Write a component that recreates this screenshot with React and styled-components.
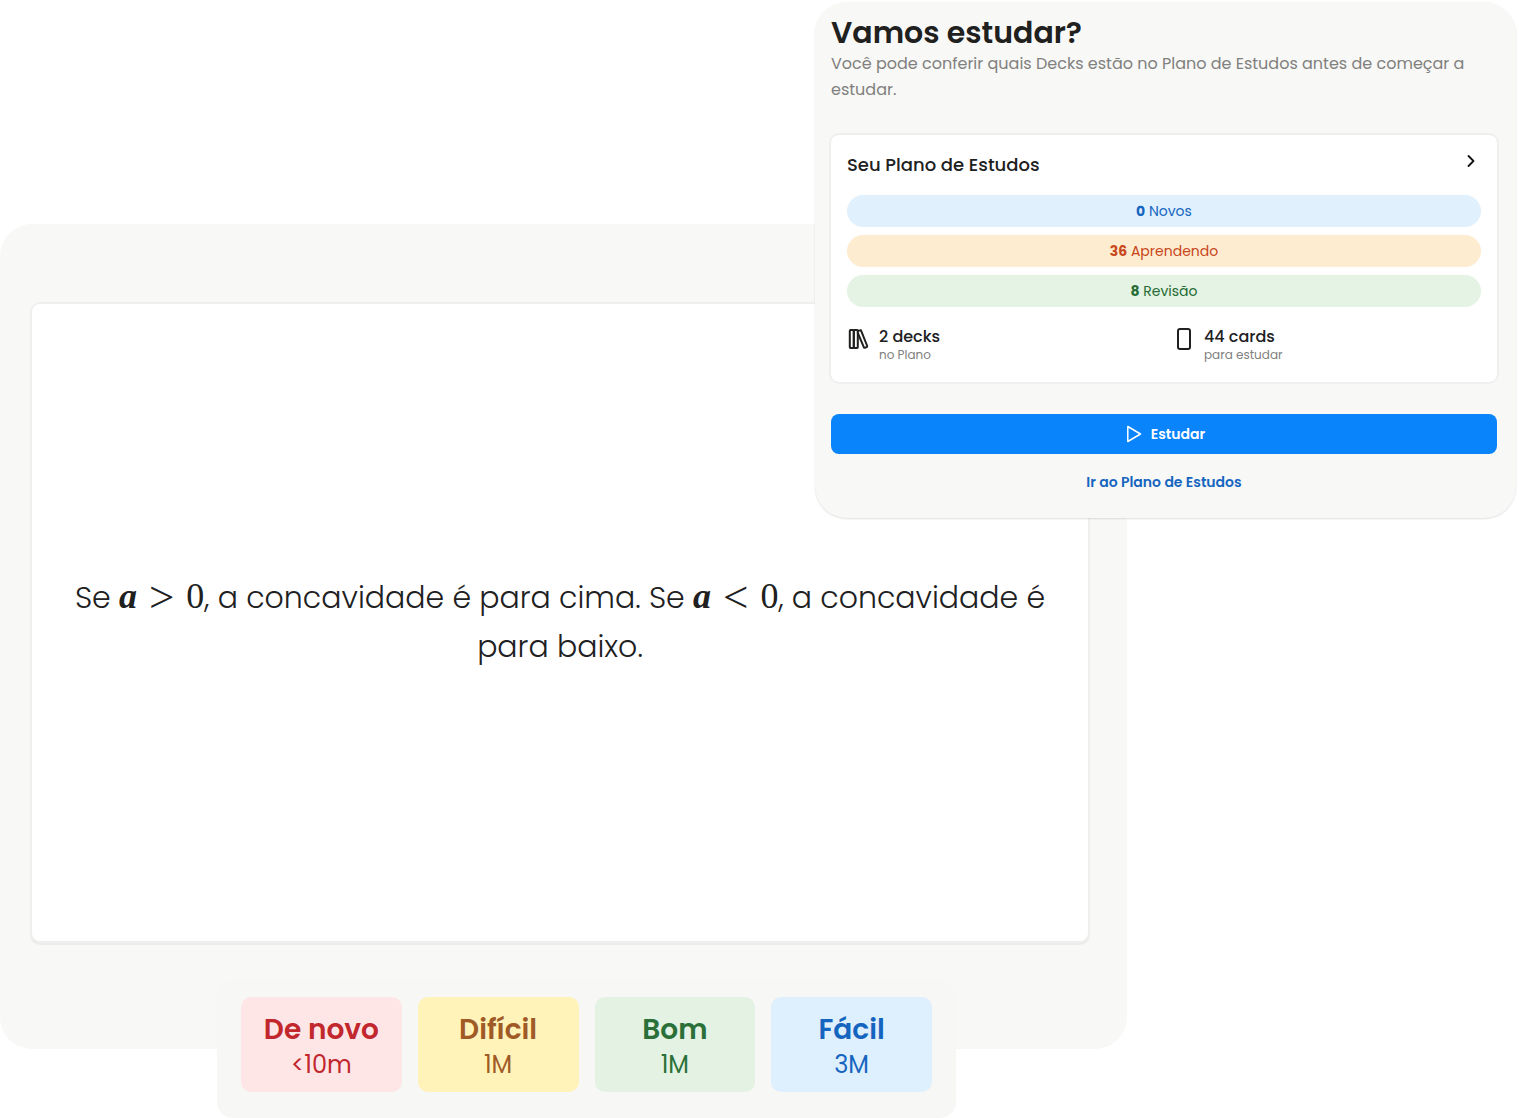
import React from "react";
import styled, { createGlobalStyle } from "styled-components";

const GlobalStyle = createGlobalStyle`
  *, *::before, *::after { box-sizing: border-box; }
  body {
    margin: 0;
    background: #ffffff;
    color: #20201e;
    font-family: Poppins, Inter, "Open Sans", sans-serif;
  }
  h1, h2, p { margin: 0; }
  button { font: inherit; border: 0; cursor: pointer; }
`;

const Stage = styled.main`
  display: grid;
  grid-template-columns: 217fr 598fr 141fr 171fr 389fr 3fr;
  grid-template-rows: 224px auto 69px auto;
`;

const ReviewPanel = styled.section`
  grid-area: 2 / 1 / 4 / 5;
  display: flex;
  min-height: 825px;
  padding: 80px 39px 108px 32px;
  border-radius: 32px;
  background: #f8f8f6;
`;

const Flashcard = styled.article`
  flex: 1;
  display: flex;
  align-items: center;
  justify-content: center;
  padding: 0 40px 2px;
  border-radius: 8px;
  background: #ffffff;
  box-shadow: 0 0 0 2px #efefee, 0 2px 0 2px #ececea;
`;

const CardText = styled.p`
  font-size: 30px;
  font-weight: 300;
  line-height: 49px;
  text-align: center;
`;

const Formula = styled.span`
  font-family: "Liberation Serif", serif;
  font-size: 36px;
  font-weight: 400;
  line-height: 1;
  white-space: nowrap;
`;

const Variable = styled.i`
  font-weight: 700;
`;

const Relation = styled.span`
  margin: 0 12px;
  font-size: 45px;
  line-height: 0;
  vertical-align: -4px;
`;

const RatingBar = styled.div`
  grid-area: 3 / 2 / 5 / 4;
  z-index: 1;
  display: grid;
  grid-template-columns: repeat(4, 1fr);
  gap: 16px;
  padding: 17px 24px 26px;
  border-radius: 16px;
  background: #f7f7f6;
`;

const RatingButton = styled.button`
  display: flex;
  flex-direction: column;
  align-items: center;
  padding: 15px 0 10px;
  border-radius: 10px;
  background: ${(p) => p.$bg};
  color: ${(p) => p.$color};
`;

const RatingName = styled.span`
  font-size: 28px;
  font-weight: 600;
  line-height: 35px;
`;

const RatingInterval = styled.span`
  font-size: 24px;
  line-height: 35px;
`;

const PlanPanel = styled.section`
  grid-area: 1 / 3 / 3 / 6;
  z-index: 2;
  align-self: start;
  display: flex;
  flex-direction: column;
  margin-top: 2px;
  padding: 13px 19px 16px 16px;
  border-radius: 32px;
  background: #f8f8f6;
  box-shadow: 0 1px 2px rgba(0, 0, 0, 0.12);
`;

const PlanTitle = styled.h1`
  font-size: 30px;
  font-weight: 600;
  line-height: 36px;
`;

const PlanIntro = styled.p`
  color: #80807e;
  font-size: 16px;
  line-height: 26px;
`;

const PlanCard = styled.div`
  margin-top: 32px;
  padding: 12px 16px 19px;
  border-radius: 8px;
  background: #ffffff;
  box-shadow: 0 0 0 2px #efefee;
`;

const PlanHeader = styled.header`
  display: flex;
  justify-content: space-between;
  align-items: flex-start;
  margin-bottom: 12px;
`;

const PlanName = styled.h2`
  font-size: 18px;
  font-weight: 500;
  line-height: 36px;
`;

const OpenButton = styled.button`
  display: flex;
  padding: 4px 0;
  background: none;
  color: #111111;
`;

const Counters = styled.div`
  display: flex;
  flex-direction: column;
  gap: 8px;
`;

const Counter = styled.p`
  border-radius: 16px;
  background: ${(p) => p.$bg};
  color: ${(p) => p.$color};
  font-size: 14px;
  line-height: 32px;
  text-align: center;
`;

const Stats = styled.div`
  display: grid;
  grid-template-columns: 1fr 1fr;
  gap: 16px;
  margin-top: 20px;
`;

const Stat = styled.div`
  display: flex;
  gap: 8px;
`;

const StatValue = styled.p`
  font-size: 16px;
  font-weight: 500;
  line-height: 20px;
`;

const StatLabel = styled.p`
  color: #80807e;
  font-size: 12px;
  line-height: 16px;
`;

const StudyButton = styled.button`
  display: flex;
  align-items: center;
  justify-content: center;
  gap: 8px;
  height: 40px;
  margin-top: 32px;
  border-radius: 8px;
  background: #0a84fa;
  color: #ffffff;
  font-size: 14px;
  font-weight: 600;
`;

const PlanLink = styled.a`
  align-self: center;
  margin-top: 8px;
  color: #1565c0;
  font-size: 14px;
  font-weight: 600;
  line-height: 40px;
  text-decoration: none;
`;

const ratings = [
  { name: "De novo", interval: "<10m", bg: "#fee6e7", color: "#c1272d" },
  { name: "Difícil", interval: "1M", bg: "#fff3b9", color: "#a05a26" },
  { name: "Bom", interval: "1M", bg: "#e3f2e3", color: "#2a7038" },
  { name: "Fácil", interval: "3M", bg: "#deeffd", color: "#1565c0" },
];

const counters = [
  { count: 0, label: "Novos", bg: "#e0f1fd", color: "#1565c0" },
  { count: 36, label: "Aprendendo", bg: "#feecd0", color: "#c8461b" },
  { count: 8, label: "Revisão", bg: "#e4f3e4", color: "#256b33" },
];

const iconProps = {
  fill: "none",
  stroke: "currentColor",
  strokeLinecap: "round",
  strokeLinejoin: "round",
  "aria-hidden": true,
};

const ChevronIcon = () => (
  <svg width="20" height="20" viewBox="0 0 20 20" {...iconProps} strokeWidth="1.8">
    <path d="M7.500 5l5 5-5 5" />
  </svg>
);

const BooksIcon = () => (
  <svg width="24" height="24" viewBox="0 0 24 24" {...iconProps} strokeWidth="2">
    <rect x="2.8" y="3" width="4" height="18" rx="0.8" />
    <rect x="6.8" y="3" width="4" height="18" rx="0.8" />
    <path d="M10.800 4l2.200-.8a.9.9 0 0 1 1.200.6l6 15.200a.9.9 0 0 1-.6 1.100l-1.700.6a.9.9 0 0 1-1.100-.6L10.800 6" />
  </svg>
);

const CardIcon = () => (
  <svg width="24" height="24" viewBox="0 0 24 24" {...iconProps} strokeWidth="2">
    <rect x="6" y="2" width="12" height="20" rx="2" />
  </svg>
);

const PlayIcon = () => (
  <svg width="20" height="20" viewBox="0 0 20 20" {...iconProps} strokeWidth="1.5">
    <path d="M4.800 2.500v15L17.500 10z" />
  </svg>
);

const Comparison = ({ sign }) => (
  <Formula>
    <Variable>a</Variable>
    <Relation>{sign}</Relation>0
  </Formula>
);

export default function App() {
  return (
    <>
      <GlobalStyle />
      <Stage>
        <ReviewPanel>
          <Flashcard>
            <CardText>
              Se <Comparison sign=">" />, a concavidade é para cima. Se{" "}
              <Comparison sign="<" />, a concavidade é <span>para baixo.</span>
            </CardText>
          </Flashcard>
        </ReviewPanel>
        <RatingBar>
          {ratings.map((r) => (
            <RatingButton key={r.name} type="button" $bg={r.bg} $color={r.color}>
              <RatingName>{r.name}</RatingName>
              <RatingInterval>{r.interval}</RatingInterval>
            </RatingButton>
          ))}
        </RatingBar>
        <PlanPanel>
          <PlanTitle>Vamos estudar?</PlanTitle>
          <PlanIntro>
            Você pode conferir quais Decks estão no Plano de Estudos antes de começar a estudar.
          </PlanIntro>
          <PlanCard>
            <PlanHeader>
              <PlanName>Seu Plano de Estudos</PlanName>
              <OpenButton type="button" aria-label="Abrir Plano de Estudos">
                <ChevronIcon />
              </OpenButton>
            </PlanHeader>
            <Counters>
              {counters.map((c) => (
                <Counter key={c.label} $bg={c.bg} $color={c.color}>
                  <b>{c.count}</b> {c.label}
                </Counter>
              ))}
            </Counters>
            <Stats>
              <Stat>
                <BooksIcon />
                <div>
                  <StatValue>2 decks</StatValue>
                  <StatLabel>no Plano</StatLabel>
                </div>
              </Stat>
              <Stat>
                <CardIcon />
                <div>
                  <StatValue>44 cards</StatValue>
                  <StatLabel>para estudar</StatLabel>
                </div>
              </Stat>
            </Stats>
          </PlanCard>
          <StudyButton type="button">
            <PlayIcon />
            Estudar
          </StudyButton>
          <PlanLink href="#plano">Ir ao Plano de Estudos</PlanLink>
        </PlanPanel>
      </Stage>
    </>
  );
}
